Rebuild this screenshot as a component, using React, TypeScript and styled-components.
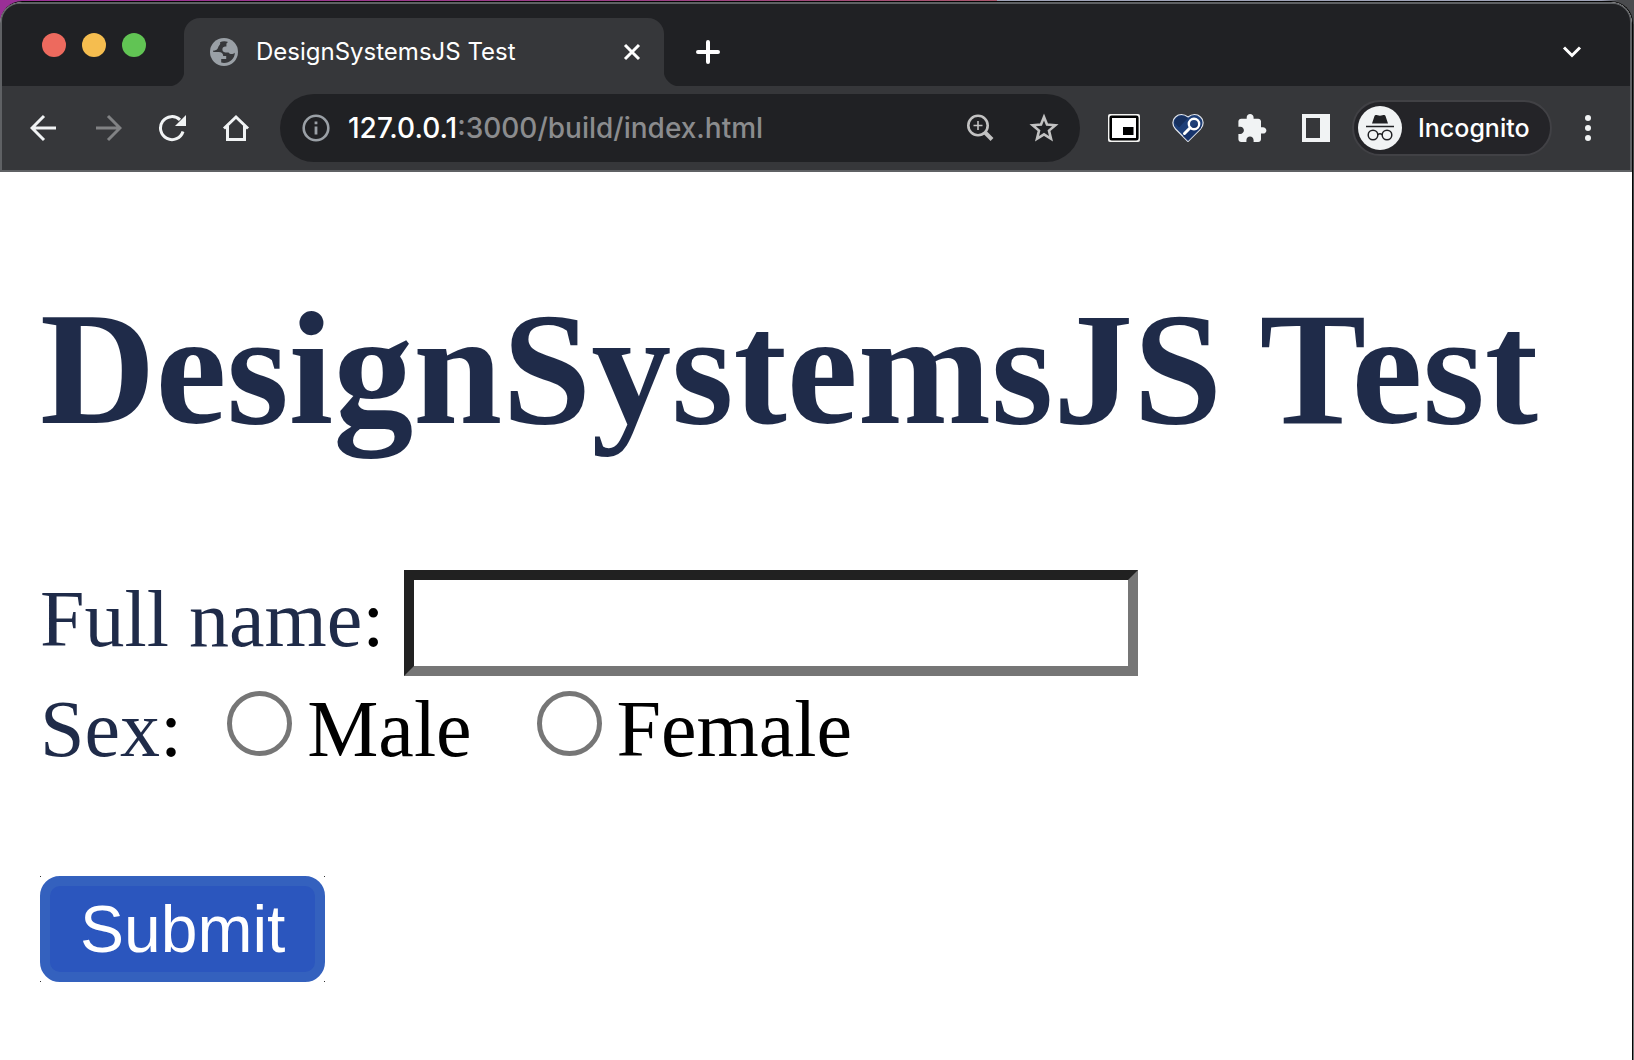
import React from "react";
import styled, { createGlobalStyle, css } from "styled-components";

const ui = '"Inter", "Roboto", sans-serif';
const serif = '"Liberation Serif", "Times New Roman", serif';
const sans = '"Liberation Sans", Arial, sans-serif';
const dark = "#202124";
const bar = "#36373a";
const light = "#f1f3f4";
const navy = "#1f2b49";

const GlobalStyle = createGlobalStyle`
  * { box-sizing: border-box; }
  body { margin: 0; background: #fff; }
`;

const Desktop = styled.div`
  display: flex;
  min-height: 100vh;
  padding: 1px 1px 0 0;
  background:
    linear-gradient(90deg, #9a2f97 0, #9a3f85 40%, #a8566c 61%, #9fa3b8 61%, #9fa3b8 98%, #4a4b4e 99%) top / 100% 24px no-repeat,
    linear-gradient(#3c3c3e, #77787a) #666;
`;

const BrowserWindow = styled.div`
  flex: 1;
  min-width: 0;
  display: flex;
  flex-direction: column;
  overflow: hidden;
  border: solid #050505;
  border-width: 1px 1px 0 0;
  border-radius: 22px 22px 0 0;
  background: #fff;
`;

const Header = styled.header`
  border: 2px solid #5f6164;
  border-radius: 20px 20px 0 0;
  background: ${bar};
  overflow: hidden;
  font-family: ${ui};
`;

const TabStrip = styled.div`
  display: flex;
  align-items: center;
  height: 82px;
  padding: 0 26px 0 40px;
  background: ${dark};
`;

const Lights = styled.div`
  display: flex;
  gap: 16px;
  margin-right: 38px;
`;

const Light = styled.button<{ $color: string }>`
  width: 24px;
  height: 24px;
  padding: 0;
  border: 0;
  border-radius: 50%;
  background: ${(p) => p.$color};
`;

const flare = css`
  content: "";
  position: absolute;
  bottom: 0;
  width: 16px;
  height: 16px;
`;

const Tab = styled.div`
  position: relative;
  align-self: flex-end;
  display: flex;
  align-items: center;
  width: 480px;
  height: 68px;
  padding: 0 18px 0 26px;
  border-radius: 16px 16px 0 0;
  background: ${bar};
  color: #fff;
  font-size: 24px;
  line-height: 32px;
  &::before {
    ${flare}
    right: 100%;
    background: radial-gradient(circle at 0 0, transparent 16px, ${bar} 17px);
  }
  &::after {
    ${flare}
    left: 100%;
    background: radial-gradient(circle at 100% 0, transparent 16px, ${bar} 17px);
  }
`;

const TabTitle = styled.span`
  flex: 1;
  margin-left: 18px;
  white-space: nowrap;
`;

const IconButton = styled.button<{ $width?: number }>`
  display: flex;
  flex: none;
  align-items: center;
  justify-content: center;
  width: ${(p) => p.$width ?? 64}px;
  height: 56px;
  padding: 0;
  border: 0;
  background: none;
`;

const TabActions = styled.div`
  flex: 1;
  align-self: flex-end;
  display: flex;
  align-items: center;
  justify-content: space-between;
  height: 68px;
  margin-left: 16px;
`;

const Toolbar = styled.div`
  display: flex;
  align-items: center;
  height: 84px;
  padding: 0 10px;
`;

const Omnibox = styled.div`
  flex: 1;
  min-width: 0;
  display: flex;
  align-items: center;
  height: 68px;
  margin: 0 12px;
  padding: 0 4px;
  border-radius: 34px;
  background: ${dark};
`;

const Address = styled.div`
  flex: 1;
  min-width: 0;
  overflow: hidden;
  white-space: nowrap;
  color: #8b8c8e;
  font-size: 28px;
  font-weight: 500;
  line-height: 36px;
  outline: none;
`;

const Host = styled.span`
  color: #fff;
`;

const Incognito = styled.button`
  display: flex;
  align-items: center;
  gap: 16px;
  width: 200px;
  height: 56px;
  margin: 0 4px;
  padding: 0 4px;
  border: 2px solid #414145;
  border-radius: 28px;
  background: #242428;
  color: #fff;
  font-family: ${ui};
  font-size: 25px;
  font-weight: 500;
  line-height: 32px;
`;

const Page = styled.main`
  flex: 1;
  padding: 0 40px 78px;
  font-family: ${serif};
  font-size: 80px;
  line-height: 92px;
  color: #000;
`;

const Title = styled.h1`
  margin: 105px 0 109px;
  font-size: 160px;
  line-height: 184px;
  font-weight: 700;
  color: ${navy};
  white-space: nowrap;
`;

const Row = styled.div`
  display: flex;
  align-items: baseline;
  margin-bottom: 7px;
  white-space: nowrap;
`;

const FieldName = styled.label`
  color: ${navy};
`;

const NameInput = styled.input`
  flex: 0 1 734px;
  min-width: 0;
  height: 106px;
  margin: 0 0 0 20px;
  padding: 5px 10px;
  border: 10px solid;
  border-color: #212121 #767676 #767676 #212121;
  border-radius: 0;
  outline: none;
  background: #fff;
  font-family: ${sans};
  font-size: 66px;
  line-height: 76px;
`;

const Choice = styled.label`
  display: flex;
  align-items: baseline;
  margin-left: 20px;
  & + & {
    margin-left: 40px;
  }
`;

const Radio = styled.input`
  appearance: none;
  width: 65px;
  height: 65px;
  margin: 0 15px 0 25px;
  border: 5px solid #767676;
  border-radius: 50%;
  background: #fff;
  &:checked {
    box-shadow: inset 0 0 0 10px #fff;
    background: #0075ff;
  }
`;

const dot = "linear-gradient(#333, #333)";

const SubmitFrame = styled.div`
  display: flex;
  width: fit-content;
  margin-top: 101px;
  background: ${dot} 0 0, ${dot} 100% 0, ${dot} 0 100%, ${dot} 100% 100%;
  background-size: 1px 1px;
  background-repeat: no-repeat;
`;

const Submit = styled.button`
  height: 106px;
  padding: 5px 30px;
  border: 10px solid #3461be;
  border-radius: 20px;
  background: #2b56be;
  color: #fff;
  font-family: ${sans};
  font-size: 66px;
  line-height: 76px;
`;

const Svg = (p: { w: number; h?: number; children: React.ReactNode }) => (
  <svg width={p.w} height={p.h ?? p.w} viewBox={`0 0 ${p.w} ${p.h ?? p.w}`} fill="none" aria-hidden="true">
    {p.children}
  </svg>
);

const Globe = () => (
  <Svg w={28}>
    <circle cx="14" cy="14" r="14" fill="#9aa0a6" />
    <path
      d="M3.200 14H8.700C11.500 14 13.200 15.500 13.200 18H16.200V21H11.200V24.600C17.700 26.500 25 21.400 24.800 14.700C23 16.600 19.900 16.600 18.600 14.400H15.400C13.100 14.400 12 12.600 12.500 10.600C12.800 8.800 14.300 8.400 16.400 8.400V6.400C16.400 5.200 17.100 4.500 18.100 4C15.500 2.900 12.400 3 10 4.200C11.100 5.900 8.500 7.800 8.100 9.600C7.600 11.800 5.500 12.900 3.200 12.600Z"
      fill={bar}
    />
  </Svg>
);

const Puzzle = () => (
  <Svg w={30}>
    <path
      d="M26 14.200H24V8.600C24 7 22.800 5.800 21.200 5.800H16.600V4.400C16.600 2.400 15 1 13.100 1S9.700 2.500 9.700 4.400V5.800H4.200C2.600 5.800 1.400 7 1.400 8.600V13.700H3.300C5.300 13.700 6.900 15.300 6.900 17.300S5.300 21 3.300 21H1.400V26.200C1.400 27.800 2.600 29 4.200 29H9.400V27.200C9.400 25.200 11 23.500 13 23.500S16.600 25.200 16.600 27.200V29H21.200C22.800 29 24 27.800 24 26.200V20.600H26C27.800 20.600 29.400 19.200 29.400 17.400S27.800 14.200 26 14.200Z"
      fill={light}
    />
  </Svg>
);

export default function App() {
  return (
    <>
      <GlobalStyle />
      <Desktop>
        <BrowserWindow>
          <Header>
            <TabStrip>
              <Lights>
                <Light $color="#ed6a5e" aria-label="Close window" />
                <Light $color="#f5bd4f" aria-label="Minimize window" />
                <Light $color="#61c454" aria-label="Zoom window" />
              </Lights>
              <Tab>
                <Globe />
                <TabTitle>DesignSystemsJS Test</TabTitle>
                <IconButton $width={28} aria-label="Close tab">
                  <Svg w={18}>
                    <path d="M2 2L16 16M16 2L2 16" stroke="#fff" strokeWidth="3" />
                  </Svg>
                </IconButton>
              </Tab>
              <TabActions>
                <IconButton $width={56} aria-label="New tab">
                  <Svg w={24}>
                    <path d="M12 2V22M2 12H22" stroke="#fff" strokeWidth="4" strokeLinecap="round" />
                  </Svg>
                </IconButton>
                <IconButton aria-label="Search tabs">
                  <Svg w={20} h={12}>
                    <path d="M2 1.500L10 9.500L18 1.500" stroke="#fff" strokeWidth="3" />
                  </Svg>
                </IconButton>
              </TabActions>
            </TabStrip>
            <Toolbar>
              <IconButton aria-label="Back">
                <Svg w={28}>
                  <path d="M14 2L2 14L14 26M2 14H26" stroke={light} strokeWidth="3" />
                </Svg>
              </IconButton>
              <IconButton aria-label="Forward">
                <Svg w={28}>
                  <path d="M14 2L26 14L14 26M26 14H2" stroke="#818284" strokeWidth="3" />
                </Svg>
              </IconButton>
              <IconButton aria-label="Reload">
                <Svg w={28}>
                  <path d="M25 17.500A11.500 11.500 0 1 1 22 5.800" stroke={light} strokeWidth="3" />
                  <path d="M28 1V12H17Z" fill={light} />
                </Svg>
              </IconButton>
              <IconButton aria-label="Home">
                <Svg w={28}>
                  <path d="M2 14.500L14 3L26 14.500M5.500 12V25.500H22.500V12" stroke={light} strokeWidth="3" />
                </Svg>
              </IconButton>
              <Omnibox>
                <IconButton aria-label="View site information">
                  <Svg w={28}>
                    <circle cx="14" cy="14" r="12.300" stroke="#9aa0a6" strokeWidth="2.600" />
                    <path d="M14 12.500V20.500M14 7.500V10.300" stroke="#9aa0a6" strokeWidth="2.800" />
                  </Svg>
                </IconButton>
                <Address role="textbox" aria-label="Address" contentEditable suppressContentEditableWarning spellCheck={false}>
                  <Host>127.0.0.1</Host>:3000/build/index.html
                </Address>
                <IconButton aria-label="Page zoom">
                  <Svg w={28}>
                    <circle cx="12" cy="11.500" r="9.700" stroke="#c2c2c2" strokeWidth="2.600" />
                    <path d="M12 7V16M7.500 11.500H16.500" stroke="#c2c2c2" strokeWidth="1.600" />
                    <path d="M18.600 18L26 25.500" stroke="#c2c2c2" strokeWidth="4" />
                  </Svg>
                </IconButton>
                <IconButton aria-label="Bookmark this tab">
                  <Svg w={30}>
                    <path
                      d="M15 4L18 11.600L26.300 12.200L20 17.600L22 25.800L15 21.400L8 25.800L10 17.600L3.700 12.200L12 11.600Z"
                      stroke="#c2c2c2"
                      strokeWidth="2.600"
                    />
                  </Svg>
                </IconButton>
              </Omnibox>
              <IconButton aria-label="Picture in picture">
                <Svg w={32} h={28}>
                  <rect width="32" height="28" rx="2" fill="#f4f4f2" />
                  <rect x="2.700" y="2.700" width="26.600" height="22.600" rx="1" fill="#fff" stroke="#000" strokeWidth="2.600" />
                  <rect x="15" y="13" width="10.500" height="8" fill="#000" />
                </Svg>
              </IconButton>
              <IconButton aria-label="Accessibility inspector">
                <Svg w={32} h={28}>
                  <path
                    d="M16 27.500L3.500 15C0 11.500 0 6 3.500 3C7 -.200 12 0 16 3C20 0 25 -.200 28.500 3C32 6 32 11.500 28.500 15Z"
                    fill="#1e3f78"
                    stroke="#dfe3ea"
                    strokeWidth="1.200"
                  />
                  <path d="M16 4L7 13.500L2.500 9C2.500 5 5 2 9 2C12 2 14 2.500 16 4Z" fill="#17305e" />
                  <path d="M20.500 13L11 22L16 27L29 14V8Z" fill="#16336b" />
                  <circle cx="22" cy="10" r="5.200" stroke="#fff" strokeWidth="2.400" />
                  <path d="M18.200 13.800L12.500 19.500" stroke="#fff" strokeWidth="3" strokeLinecap="round" />
                </Svg>
              </IconButton>
              <IconButton aria-label="Extensions">
                <Puzzle />
              </IconButton>
              <IconButton aria-label="Side panel">
                <Svg w={28}>
                  <path d="M0 0H28V28H0ZM4 4V24H18V4Z" fill={light} fillRule="evenodd" />
                </Svg>
              </IconButton>
              <Incognito>
                <Svg w={44}>
                  <circle cx="22" cy="22" r="22" fill={light} />
                  <path d="M14 17.500L16.500 10Q17 8.500 18.500 9L22 9.800L25.500 9Q27 8.500 27.500 10L30 17.500Z" fill={dark} />
                  <path d="M8 20.500H36" stroke={dark} strokeWidth="1.600" />
                  <circle cx="15" cy="29" r="4.800" stroke={dark} strokeWidth="1.500" />
                  <circle cx="29" cy="29" r="4.800" stroke={dark} strokeWidth="1.500" />
                  <path d="M19.800 28.600Q22 27 24.200 28.600" stroke={dark} strokeWidth="1.500" />
                </Svg>
                Incognito
              </Incognito>
              <IconButton aria-label="Menu">
                <Svg w={6} h={28}>
                  <circle cx="3" cy="4" r="3" fill={light} />
                  <circle cx="3" cy="14" r="3" fill={light} />
                  <circle cx="3" cy="24" r="3" fill={light} />
                </Svg>
              </IconButton>
            </Toolbar>
          </Header>
          <Page>
            <Title>DesignSystemsJS Test</Title>
            <form onSubmit={(e) => e.preventDefault()}>
              <Row>
                <FieldName htmlFor="fullname">Full name</FieldName>:
                <NameInput id="fullname" type="text" />
              </Row>
              <Row role="radiogroup" aria-labelledby="sex">
                <FieldName as="span" id="sex">Sex</FieldName>:
                <Choice>
                  <Radio type="radio" name="sex" value="male" />
                  Male
                </Choice>
                <Choice>
                  <Radio type="radio" name="sex" value="female" />
                  Female
                </Choice>
              </Row>
              <SubmitFrame>
                <Submit type="submit">Submit</Submit>
              </SubmitFrame>
            </form>
          </Page>
        </BrowserWindow>
      </Desktop>
    </>
  );
}
